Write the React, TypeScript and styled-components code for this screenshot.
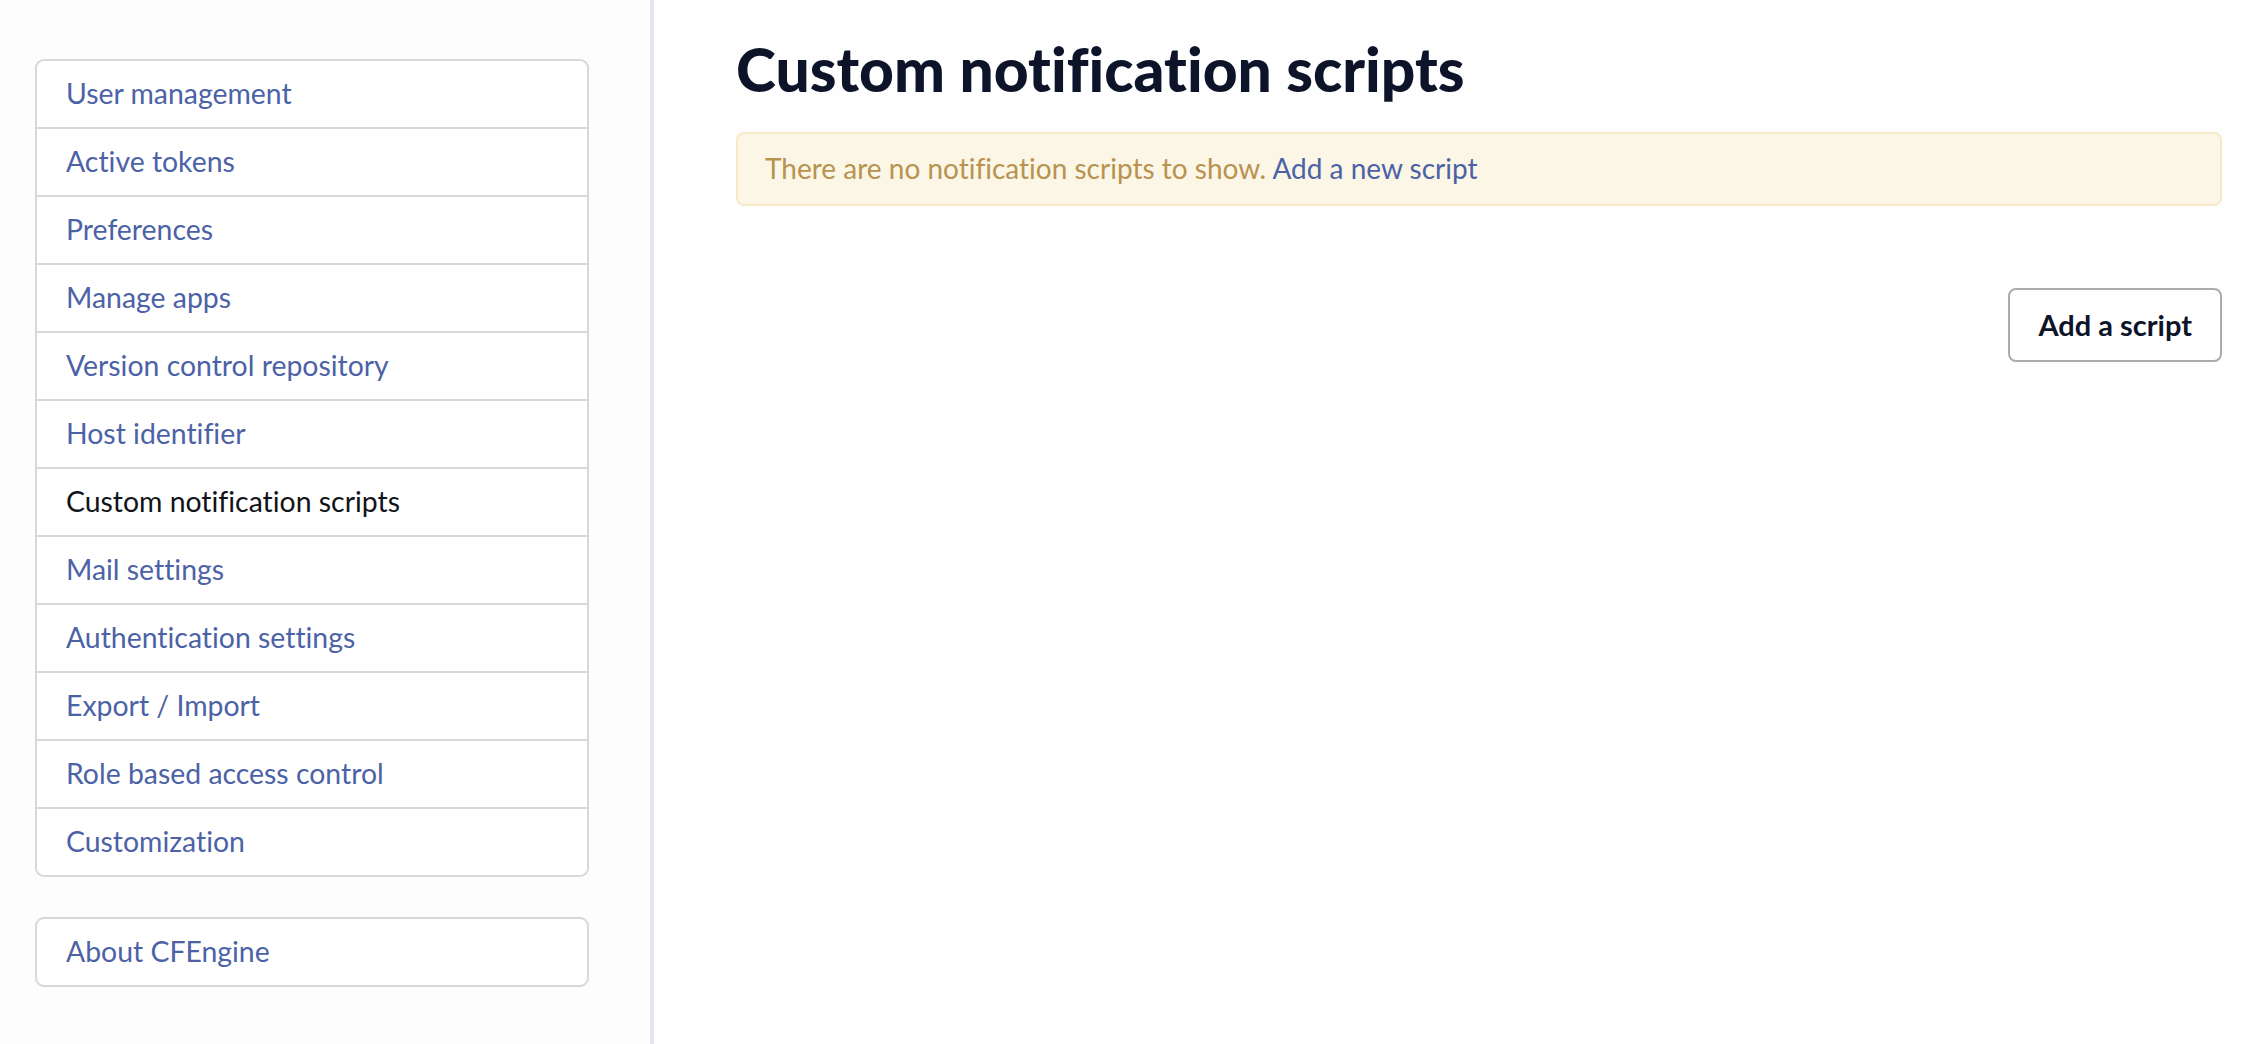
import React from 'react';
import styled, { createGlobalStyle } from 'styled-components';

const GlobalStyle = createGlobalStyle`
  html, body {
    margin: 0;
    padding: 0;
    background: #fefefe;
  }
  body {
    font-family: Lato, 'Noto Sans', sans-serif;
    font-variant-ligatures: none;
  }
  * {
    box-sizing: border-box;
  }
`;

const settingsLinks = [
  'User management',
  'Active tokens',
  'Preferences',
  'Manage apps',
  'Version control repository',
  'Host identifier',
  'Custom notification scripts',
  'Mail settings',
  'Authentication settings',
  'Export / Import',
  'Role based access control',
  'Customization',
];

const activeLink = 'Custom notification scripts';

export default function App() {
  return (
    <>
      <GlobalStyle />
      <Layout>
        <Sidebar>
          <NavList>
            {settingsLinks.map((label) => (
              <NavItem key={label} $active={label === activeLink}>
                {label}
              </NavItem>
            ))}
          </NavList>
          <NavList>
            <NavItem>About CFEngine</NavItem>
          </NavList>
        </Sidebar>
        <Content>
          <Title>Custom notification scripts</Title>
          <Notice>
            There are no notification scripts to show.{' '}
            <NoticeLink href="#">Add a new script</NoticeLink>
          </Notice>
          <Actions>
            <OutlineButton type="button">Add a script</OutlineButton>
          </Actions>
        </Content>
      </Layout>
    </>
  );
}

const Layout = styled.div`
  display: flex;
  min-height: 100vh;
`;

const Sidebar = styled.aside`
  width: 654px;
  flex-shrink: 0;
  padding: 59px 61px 0 35px;
  border-right: 4px solid #e2e6ec;
  background: #fdfdfd;
  display: flex;
  flex-direction: column;
  gap: 40px;
`;

const NavList = styled.ul`
  list-style: none;
  margin: 0;
  padding: 0;
  border: 2px solid #d8d8d4;
  border-radius: 9px;
  background: #fff;
  overflow: hidden;
`;

const NavItem = styled.li<{ $active?: boolean }>`
  padding: 11px 29px 12px;
  font-size: 28.4px;
  line-height: 43px;
  color: ${(p) => (p.$active ? '#111318' : '#4c62a6')};
  border-bottom: 2px solid #d8d8d4;
  cursor: pointer;

  &:last-child {
    border-bottom: none;
    padding-bottom: 12px;
  }
`;

const Content = styled.main`
  flex: 1;
  padding: 33px 30px 0 82px;
  display: flex;
  flex-direction: column;
`;

const Title = styled.h1`
  margin: 0 0 26px;
  font-size: 60.5px;
  line-height: 1.2;
  font-weight: 900;
  color: #0d1429;
`;

const Notice = styled.div`
  padding: 12px 27px 14px;
  font-size: 28px;
  line-height: 44px;
  color: #b8934f;
  background: #fbf6e5;
  border: 2px solid #f6e8c9;
  border-radius: 8px;
`;

const NoticeLink = styled.a`
  color: #4c62a6;
  text-decoration: none;
`;

const Actions = styled.div`
  display: flex;
  justify-content: flex-end;
  margin-top: 82px;
`;

const OutlineButton = styled.button`
  font-family: Lato, 'Noto Sans', sans-serif;
  font-size: 29px;
  font-weight: 700;
  line-height: 44px;
  color: #0d1429;
  background: #fff;
  border: 2px solid #acacac;
  border-radius: 8px;
  padding: 13px 28px;
  cursor: pointer;
`;
